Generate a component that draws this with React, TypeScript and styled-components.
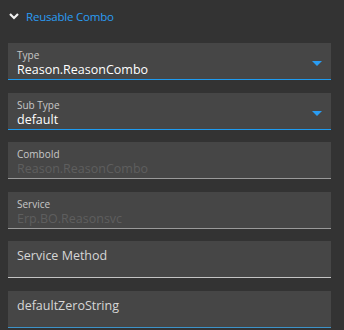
import React from "react";
import styled, { createGlobalStyle } from "styled-components";

const GlobalStyle = createGlobalStyle`
  html, body {
    margin: 0;
    padding: 0;
    background: #333333;
  }
  body {
    font-family: "Open Sans", "Noto Sans", sans-serif;
  }
`;

const Panel = styled.div`
  width: 344px;
  height: 330px;
  overflow: hidden;
  box-sizing: border-box;
  padding: 0 13px 0 8px;
`;

const Header = styled.div`
  display: flex;
  align-items: center;
  gap: 6px;
  height: 32px;
  color: #2a9df4;
  font-size: 11.5px;
  letter-spacing: -0.2px;
  margin-bottom: 11px;
`;

const Fields = styled.div`
  display: flex;
  flex-direction: column;
  gap: 12.6px;
`;

type FieldProps = { $line: string };

const Field = styled.div<FieldProps>`
  position: relative;
  height: 37px;
  box-sizing: border-box;
  background: #464646;
  border-bottom: 1px solid ${(p) => p.$line};
  padding: 6px 9px 0;
  display: flex;
  flex-direction: column;
`;

const Label = styled.div`
  font-size: 10px;
  line-height: 13px;
  color: #c8c8c8;
`;

const Value = styled.div<{ $disabled?: boolean }>`
  font-size: 12.5px;
  line-height: 15px;
  color: ${(p) => (p.$disabled ? "#5e5e5e" : "#ffffff")};
`;

const Placeholder = styled.div`
  font-size: 12.5px;
  line-height: 16px;
  margin-top: 1px;
  color: #d6d6d6;
`;

const Caret = styled.div`
  position: absolute;
  right: 9px;
  top: 18px;
  width: 0;
  height: 0;
  border-left: 5px solid transparent;
  border-right: 5px solid transparent;
  border-top: 5px solid #2a9df4;
`;

const Chevron = () => (
  <svg width="12" height="10" viewBox="0 0 12 10">
    <path d="M2 3 L6 7 L10 3" stroke="#f2f2f2" strokeWidth="2.2" fill="none" />
  </svg>
);

export default function App() {
  return (
    <Panel>
      <GlobalStyle />
      <Header>
        <Chevron />
        Reusable Combo
      </Header>
      <Fields>
        <Field $line="#1e9bf0">
          <Label>Type</Label>
          <Value>Reason.ReasonCombo</Value>
          <Caret />
        </Field>
        <Field $line="#1e9bf0">
          <Label>Sub Type</Label>
          <Value>default</Value>
          <Caret />
        </Field>
        <Field $line="#9a9a9a">
          <Label>ComboId</Label>
          <Value $disabled>Reason.ReasonCombo</Value>
        </Field>
        <Field $line="#9a9a9a">
          <Label>Service</Label>
          <Value $disabled>Erp.BO.Reasonsvc</Value>
        </Field>
        <Field $line="#c4c4c4">
          <Placeholder>Service Method</Placeholder>
        </Field>
        <Field $line="#3d93c9">
          <Placeholder>defaultZeroString</Placeholder>
        </Field>
      </Fields>
    </Panel>
  );
}
